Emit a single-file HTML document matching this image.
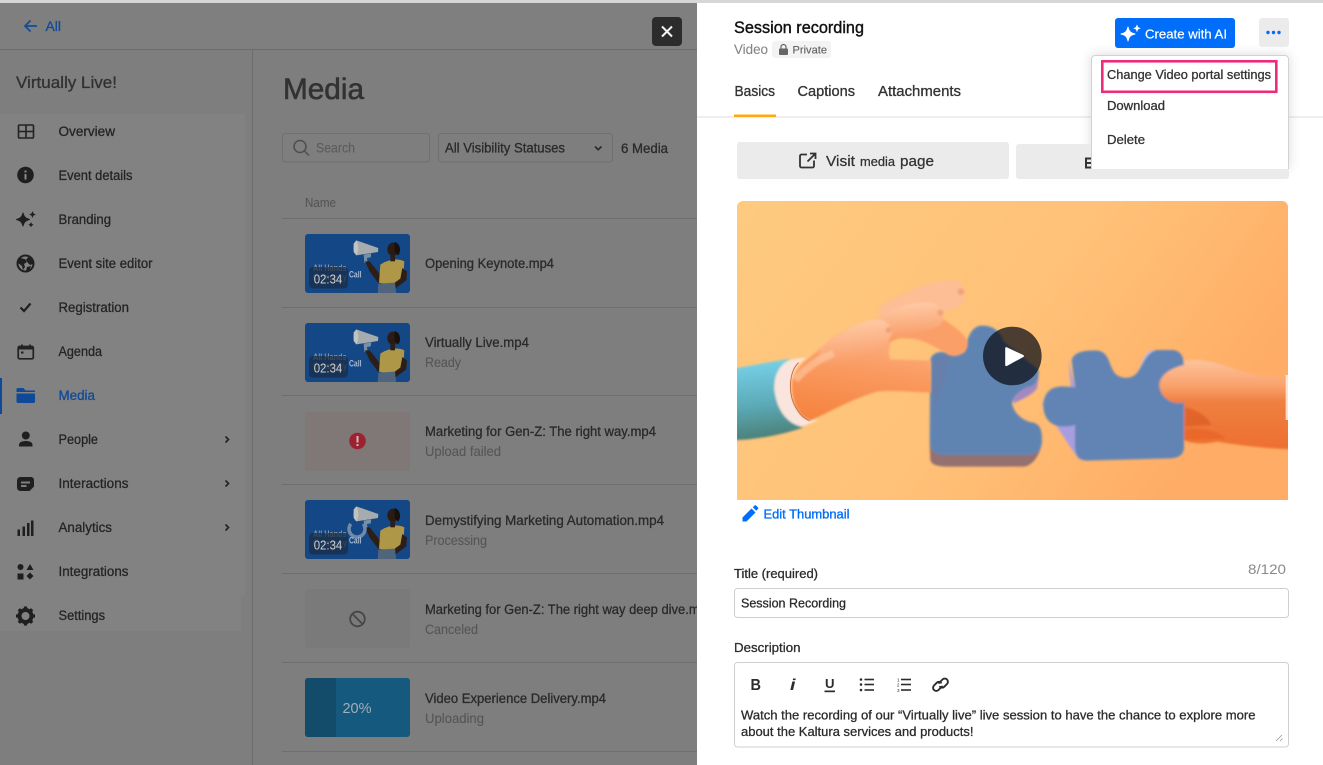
<!DOCTYPE html>
<html lang="en">
<head>
<meta charset="utf-8">
<title>Media - Session recording</title>
<style>
html,body{margin:0;padding:0;width:1323px;height:765px;overflow:hidden;background:#fff}
svg{display:block}
text{font-family:"Liberation Sans",Arial,sans-serif;white-space:pre}
.nav{font-size:13.5px;fill:#242424;stroke:#242424;stroke-width:.28}
.t{font-size:13.5px;fill:#2a2a2a;stroke:#2a2a2a;stroke-width:.3}
.s{font-size:13.5px;fill:#565656;stroke:#565656;stroke-width:.12}
.d{font-size:13px;fill:#2b2b2b;stroke:#2b2b2b;stroke-width:.28}
.tab{font-size:14.5px;fill:#333;stroke:#333;stroke-width:.32}
.dur{font-size:13px;fill:#cfcfcf}
.ah{font-size:9.5px;font-weight:700;fill:#8a95a2}
.co{font-size:9.5px;font-weight:700;fill:#6a7a90}
.call{font-size:9.5px;font-weight:700;fill:#a9bbcf}
</style>
</head>
<body>
<svg xmlns="http://www.w3.org/2000/svg" width="1323" height="765" viewBox="0 0 1323 765">
<defs>
  <linearGradient id="bg" x1="0" y1="0" x2="1" y2="0.4">
    <stop offset="0" stop-color="#fdca80"/><stop offset="0.6" stop-color="#ffc177"/><stop offset="1" stop-color="#ffad66"/>
  </linearGradient>
  <linearGradient id="sleeve" x1="0.4" y1="0" x2="0.5" y2="1">
    <stop offset="0" stop-color="#78d2ea"/><stop offset="0.55" stop-color="#5cabb8"/><stop offset="1" stop-color="#4a7d74"/>
  </linearGradient>
  <linearGradient id="handL" x1="0.6" y1="0" x2="0.4" y2="1">
    <stop offset="0" stop-color="#fdb88c"/><stop offset="0.5" stop-color="#fa9a60"/><stop offset="1" stop-color="#f58440"/>
  </linearGradient>
  <linearGradient id="fing" x1="0" y1="0" x2="0.15" y2="1">
    <stop offset="0" stop-color="#ffd0ae"/><stop offset="1" stop-color="#f99a63"/>
  </linearGradient>
  <linearGradient id="handR" gradientUnits="userSpaceOnUse" x1="0" y1="90" x2="0" y2="355">
    <stop offset="0" stop-color="#fdc49d"/><stop offset="0.3" stop-color="#f9a06a"/><stop offset="0.48" stop-color="#ef7f41"/><stop offset="1" stop-color="#ee7030"/>
  </linearGradient>
  <filter id="b1" x="-10%" y="-10%" width="120%" height="120%"><feGaussianBlur stdDeviation="3"/></filter>
  <filter id="sh" x="-20%" y="-20%" width="140%" height="140%"><feGaussianBlur stdDeviation="6"/></filter>
  <clipPath id="imgclip"><path d="M737 207a6 6 0 0 1 6-6h539a6 6 0 0 1 6 6v293H737z"/></clipPath>
  <clipPath id="thumbclip"><rect width="105" height="59" rx="3"/></clipPath>
  <g id="thumb">
    <g clip-path="url(#thumbclip)">
      <rect width="105" height="59" fill="#134785"/>
      <g transform="translate(-2 -2) scale(.3333)">
        <path d="M160 25C149 40 149 58 160 70L225 60L226 48Z" fill="#a6acae"/>
        <path d="M160 25C168 40 168 58 160 70L152 60L152 35Z" fill="#c0c3c2"/>
        <path d="M182 68L205 64L203 76L192 78L194 92L184 92Z" fill="#7690a8"/>
        <path d="M186 88L200 88L232 128L240 150L225 152L200 118Z" fill="#2d1f18"/>
        <path d="M232 98C255 82 285 78 304 88L300 150C280 158 250 158 228 152Z" fill="#ae9747"/>
        <path d="M298 108L312 118L310 145L268 176L256 166L292 140Z" fill="#2d1f18"/>
        <ellipse cx="270" cy="52" rx="17" ry="20" fill="#2a1b14"/>
        <path d="M275 30C292 34 296 60 285 70L275 60Z" fill="#17100c"/>
        <rect x="262" y="68" width="14" height="20" fill="#2d1f18"/>
        <path d="M226 155L276 152L280 186L224 186Z" fill="#50647c"/>
      </g>
    </g>
  </g>
</defs>

<!-- left dimmed app -->
<rect width="697" height="765" fill="#7e7e7e"/>
<rect x="0" y="0" width="1323" height="3" fill="#d6d6d6"/>
<rect x="0" y="3" width="697" height="46" fill="#7f7f7f"/>
<rect x="0" y="49" width="697" height="1" fill="#6c6c6c"/>
<rect x="252" y="50" width="1" height="715" fill="#6c6c6c"/>
<rect x="0" y="114" width="245" height="482" fill="#828282"/>
<rect x="0" y="596" width="241" height="35" fill="#828282"/>

<path d="M37 26H25M30.500 20.500L25 26l5.500 5.500" fill="none" stroke="#134b94" stroke-width="1.700"/>
<text x="45.500" y="31" font-size="13.500" fill="#134b94" stroke="#134b94" stroke-width=".3" textLength="15.500" lengthAdjust="spacingAndGlyphs">All</text>

<text x="16" y="88" font-size="16.500" fill="#313131" stroke="#313131" stroke-width=".3" textLength="101" lengthAdjust="spacingAndGlyphs">Virtually Live!</text>

<!-- nav icons -->
<g>
  <path d="M19.500 125h13a1 1 0 0 1 1 1v11a1 1 0 0 1-1 1h-13a1 1 0 0 1-1-1v-11a1 1 0 0 1 1-1zM26 125v13M18.500 131.500h15" fill="none" stroke="#222" stroke-width="1.600"/>
  <circle cx="25.500" cy="175" r="8.300" fill="#1f1f1f"/><rect x="24.500" y="174" width="2" height="5.500" fill="#8a8a8a"/><rect x="24.500" y="170.500" width="2" height="2" fill="#8a8a8a"/>
  <path d="M23 213C24 217 25.500 218.500 29.500 219.500C25.500 220.500 24 222 23 226C22 222 20.500 220.500 16.500 219.500C20.500 218.500 22 217 23 213Z" fill="#1f1f1f" stroke="#1f1f1f" stroke-width="1" stroke-linejoin="round"/>
  <path d="M32.500 211.500c.4 2 .9 2.500 3 3-2.100.5-2.600 1-3 3-.4-2-.9-2.500-3-3 2.100-.5 2.600-1 3-3zM31 222.500c.3 1.500.7 1.900 2.200 2.200-1.500.3-1.900.7-2.200 2.200-.3-1.500-.7-1.900-2.200-2.200 1.500-.3 1.900-.7 2.200-2.200z" fill="#1f1f1f" stroke="#1f1f1f" stroke-width=".6"/>
  <circle cx="25.500" cy="263.500" r="8" fill="none" stroke="#1f1f1f" stroke-width="2"/>
  <path d="M20 258l5 1 2 3-3 2 1 3-2 3-1-4-4-3zM28 257l4 2 1 5-3 1-2-2-2-3zM27 267l4-1-2 5-3 0z" fill="#1f1f1f"/>
  <path d="M20.500 307.500l3.500 3.500 6.500-7.500" fill="none" stroke="#1f1f1f" stroke-width="2.200"/>
  <path d="M19.500 346.500h12.500a1.300 1.300 0 0 1 1.300 1.300v9.700a1.300 1.300 0 0 1-1.300 1.300H19.500a1.300 1.300 0 0 1-1.300-1.300v-9.700a1.300 1.300 0 0 1 1.300-1.300z" fill="none" stroke="#222" stroke-width="1.700"/>
  <rect x="18.500" y="346" width="14.500" height="3.500" fill="#222"/><rect x="21" y="344.500" width="1.800" height="3" fill="#222"/><rect x="29" y="344.500" width="1.800" height="3" fill="#222"/><rect x="21" y="351.500" width="2.500" height="2" fill="#222"/>
  <path d="M16.500 389.500a1.500 1.500 0 0 1 1.500-1.500h5.500l2 2.500h9.500v1.500h-18.500z" fill="#0f4a98"/>
  <path d="M16.500 393.500h18.500v8a1.500 1.500 0 0 1-1.500 1.500h-15.500a1.500 1.500 0 0 1-1.500-1.500z" fill="#0f4a98"/>
  <circle cx="25.800" cy="435.500" r="4" fill="#1f1f1f"/><path d="M19 446.500v-1.500c0-3 3.500-4 6.800-4s6.700 1 6.700 4v1.500z" fill="#1f1f1f"/>
  <path d="M20.500 477h10.500a3 3 0 0 1 3 3v6.500l-4.500 4.500h-9a3.500 3.500 0 0 1-3.500-3.500v-7a3.500 3.500 0 0 1 3.500-3.500z" fill="#1f1f1f"/><rect x="21" y="481.500" width="9" height="2" fill="#7f7f7f"/><rect x="21" y="485" width="5.500" height="2" fill="#7f7f7f"/>
  <path d="M17.500 529.500h2.500v6.500h-2.500zM22.500 526.500h2.500v9.500h-2.500zM27 523h2.500v13h-2.500zM31 520.500h2.500v15.500h-2.500z" fill="#1f1f1f"/>
  <circle cx="20.500" cy="567" r="3" fill="#1f1f1f"/><path d="M30 564l3.500 6h-7z" fill="#1f1f1f"/><rect x="17.500" y="573.500" width="6" height="6" fill="#1f1f1f"/><path d="M30 572.500l3.500 3.500-3.500 3.500-3.500-3.500z" fill="#1f1f1f"/>
  <circle cx="25.500" cy="616" r="6" fill="none" stroke="#1f1f1f" stroke-width="4"/>
  <path d="M25.500 606.500v3M25.500 622.500v3M16 616h3M32 616h3M18.800 609.300l2 2M30.200 620.700l2 2M32.200 609.300l-2 2M20.800 620.700l-2 2" stroke="#1f1f1f" stroke-width="3.200" fill="none"/>
</g>
<rect x="0" y="378" width="2" height="36" fill="#0f4a98"/>

<g class="nav">
  <text x="58.500" y="136" textLength="56.500" lengthAdjust="spacingAndGlyphs">Overview</text>
  <text x="58.500" y="180" textLength="74" lengthAdjust="spacingAndGlyphs">Event details</text>
  <text x="58.500" y="224" textLength="52.500" lengthAdjust="spacingAndGlyphs">Branding</text>
  <text x="58.500" y="268" textLength="94" lengthAdjust="spacingAndGlyphs">Event site editor</text>
  <text x="58.500" y="312" textLength="70.500" lengthAdjust="spacingAndGlyphs">Registration</text>
  <text x="58.500" y="356" textLength="43.500" lengthAdjust="spacingAndGlyphs">Agenda</text>
  <text x="58.500" y="400" textLength="36.500" lengthAdjust="spacingAndGlyphs" style="fill:#0f4a98;stroke:#0f4a98">Media</text>
  <text x="58.500" y="444" textLength="39.500" lengthAdjust="spacingAndGlyphs">People</text>
  <text x="58.500" y="488" textLength="70" lengthAdjust="spacingAndGlyphs">Interactions</text>
  <text x="58.500" y="532" textLength="53.500" lengthAdjust="spacingAndGlyphs">Analytics</text>
  <text x="58.500" y="576" textLength="70" lengthAdjust="spacingAndGlyphs">Integrations</text>
  <text x="58.500" y="620" textLength="46.500" lengthAdjust="spacingAndGlyphs">Settings</text>
</g>
<path d="M225.500 436.500l3 3-3 3M225.500 480.500l3 3-3 3M225.500 524.500l3 3-3 3" fill="none" stroke="#222" stroke-width="1.600"/>

<!-- main content -->
<text x="283" y="99" font-size="30" fill="#323232" stroke="#323232" stroke-width=".6" textLength="81" lengthAdjust="spacingAndGlyphs">Media</text>

<rect x="282.500" y="133.500" width="147" height="28.500" rx="3" fill="none" stroke="#6f6f6f"/>
<circle cx="300" cy="146.500" r="6" fill="none" stroke="#4e4e4e" stroke-width="1.500"/>
<path d="M304.500 151l4.500 4.500" stroke="#4e4e4e" stroke-width="1.500"/>
<text x="316" y="152.500" class="s" style="fill:#5c5c5c;stroke:#5c5c5c" textLength="39" lengthAdjust="spacingAndGlyphs">Search</text>
<rect x="438.500" y="133.500" width="174" height="28.500" rx="3" fill="none" stroke="#6f6f6f"/>
<text x="445" y="152.500" class="t" textLength="120" lengthAdjust="spacingAndGlyphs">All Visibility Statuses</text>
<path d="M595 146.500l3.200 3.200 3.200-3.200" fill="none" stroke="#2a2a2a" stroke-width="1.600"/>
<text x="621" y="153" class="t" textLength="47" lengthAdjust="spacingAndGlyphs">6 Media</text>

<text x="305" y="207" font-size="12.500" fill="#555" stroke="#555" stroke-width=".1" textLength="31" lengthAdjust="spacingAndGlyphs">Name</text>

<g fill="#6e6e6e">
  <rect x="282" y="218" width="415" height="1"/>
  <rect x="282" y="307" width="415" height="1"/>
  <rect x="282" y="395" width="415" height="1"/>
  <rect x="282" y="484" width="415" height="1"/>
  <rect x="282" y="573" width="415" height="1"/>
  <rect x="282" y="662" width="415" height="1"/>
  <rect x="282" y="751" width="415" height="1"/>
</g>

<!-- row 1 -->
<use href="#thumb" x="305" y="234"/>
<text x="313" y="271" class="ah" textLength="33.500" lengthAdjust="spacingAndGlyphs">All Hands</text>
<text x="313" y="280" class="co" textLength="34" lengthAdjust="spacingAndGlyphs">Company</text>
<text x="349" y="277.500" class="call" textLength="12.500" lengthAdjust="spacingAndGlyphs">Call</text>
<rect x="309" y="267" width="39" height="21.500" rx="4" fill="#1a2c44" fill-opacity=".72"/>
<text x="313.700" y="283.500" class="dur" textLength="28.600" lengthAdjust="spacingAndGlyphs">02:34</text>
<text x="425" y="268" class="t" textLength="129" lengthAdjust="spacingAndGlyphs">Opening Keynote.mp4</text>

<!-- row 2 -->
<use href="#thumb" x="305" y="323"/>
<text x="313" y="360" class="ah" textLength="33.500" lengthAdjust="spacingAndGlyphs">All Hands</text>
<text x="313" y="369" class="co" textLength="34" lengthAdjust="spacingAndGlyphs">Company</text>
<text x="349" y="366.500" class="call" textLength="12.500" lengthAdjust="spacingAndGlyphs">Call</text>
<rect x="309" y="356" width="39" height="21.500" rx="4" fill="#1a2c44" fill-opacity=".72"/>
<text x="313.700" y="372.500" class="dur" textLength="28.600" lengthAdjust="spacingAndGlyphs">02:34</text>
<text x="425" y="347" class="t" textLength="104" lengthAdjust="spacingAndGlyphs">Virtually Live.mp4</text>
<text x="425" y="367" class="s" textLength="36" lengthAdjust="spacingAndGlyphs">Ready</text>

<!-- row 3 -->
<rect x="305" y="412" width="105" height="59" rx="3" fill="#807777"/>
<circle cx="357.500" cy="441" r="8.300" fill="#9b2230"/>
<rect x="356.500" y="436" width="2" height="6.500" fill="#d9b5b5"/><rect x="356.500" y="444" width="2" height="2" fill="#d9b5b5"/>
<text x="425" y="436" class="t" textLength="231" lengthAdjust="spacingAndGlyphs">Marketing for Gen-Z: The right way.mp4</text>
<text x="425" y="456" class="s" textLength="76" lengthAdjust="spacingAndGlyphs">Upload failed</text>

<!-- row 4 -->
<use href="#thumb" x="305" y="500"/>
<circle cx="357" cy="529" r="8" fill="none" stroke="#6f8aa8" stroke-width="3.500" stroke-dasharray="36 14" transform="rotate(-40 357 529)"/>
<text x="313" y="537" class="ah" textLength="33.500" lengthAdjust="spacingAndGlyphs">All Hands</text>
<text x="313" y="546" class="co" textLength="34" lengthAdjust="spacingAndGlyphs">Company</text>
<text x="349" y="543.500" class="call" textLength="12.500" lengthAdjust="spacingAndGlyphs">Call</text>
<rect x="309" y="533" width="39" height="21.500" rx="4" fill="#1a2c44" fill-opacity=".72"/>
<text x="313.700" y="549.500" class="dur" textLength="28.600" lengthAdjust="spacingAndGlyphs">02:34</text>
<text x="425" y="525" class="t" textLength="239" lengthAdjust="spacingAndGlyphs">Demystifying Marketing Automation.mp4</text>
<text x="425" y="545" class="s" textLength="62" lengthAdjust="spacingAndGlyphs">Processing</text>

<!-- row 5 -->
<rect x="305" y="589" width="105" height="59" rx="3" fill="#7a7a7a"/>
<circle cx="357.500" cy="619" r="7.300" fill="none" stroke="#464646" stroke-width="1.800"/>
<path d="M352.500 614l10 10" stroke="#464646" stroke-width="1.800"/>
<text x="425" y="614" class="t" textLength="289" lengthAdjust="spacingAndGlyphs">Marketing for Gen-Z: The right way deep dive.mp4</text>
<text x="425" y="634" class="s" textLength="53" lengthAdjust="spacingAndGlyphs">Canceled</text>

<!-- row 6 -->
<rect x="305" y="678" width="105" height="59" rx="3" fill="#15597f"/>
<path d="M308 678h28v59h-28a3 3 0 0 1-3-3v-53a3 3 0 0 1 3-3z" fill="#134b6b"/>
<text x="342.500" y="713" font-size="15" fill="#a3aeb6" textLength="29" lengthAdjust="spacingAndGlyphs">20%</text>
<text x="425" y="703" class="t" textLength="181" lengthAdjust="spacingAndGlyphs">Video Experience Delivery.mp4</text>
<text x="425" y="723" class="s" textLength="59" lengthAdjust="spacingAndGlyphs">Uploading</text>

<!-- close button -->
<rect x="652" y="17" width="30" height="29" rx="4" fill="#2c2c2c"/>
<path d="M662 26.500l10 10M672 26.500l-10 10" stroke="#f2f2f2" stroke-width="2"/>

<!-- right panel -->
<rect x="697" y="3" width="626" height="762" fill="#fff"/>

<text x="734" y="33" font-size="16.500" fill="#111" stroke="#111" stroke-width=".4" textLength="130" lengthAdjust="spacingAndGlyphs">Session recording</text>
<text x="734" y="54" font-size="13.500" fill="#858585" stroke="#858585" stroke-width=".1" textLength="34" lengthAdjust="spacingAndGlyphs">Video</text>
<rect x="772" y="41" width="59" height="17" rx="3" fill="#f3f3f3"/>
<rect x="779" y="48.500" width="9" height="6.500" rx="1" fill="#666"/>
<path d="M781 48.500v-1.500a2.500 2.500 0 0 1 5 0v1.500" fill="none" stroke="#666" stroke-width="1.200"/>
<text x="792.500" y="53.500" font-size="11" fill="#5e5e5e" stroke="#5e5e5e" stroke-width=".12" textLength="34.500" lengthAdjust="spacingAndGlyphs">Private</text>

<text x="734.500" y="96" class="tab" textLength="40.500" lengthAdjust="spacingAndGlyphs">Basics</text>
<text x="797.500" y="96" class="tab" textLength="57.500" lengthAdjust="spacingAndGlyphs">Captions</text>
<text x="878" y="96" class="tab" textLength="83" lengthAdjust="spacingAndGlyphs">Attachments</text>
<rect x="697" y="116.500" width="626" height="1" fill="#dedede"/>
<rect x="734" y="114.500" width="42" height="2.500" fill="#ffa90f"/>

<!-- action buttons -->
<rect x="737" y="142" width="272" height="37" rx="3" fill="#ebebeb"/>
<path d="M807 154.500h-5.500a1.500 1.500 0 0 0-1.500 1.500v10a1.500 1.500 0 0 0 1.500 1.500h11a1.500 1.500 0 0 0 1.500-1.500v-5.500" fill="none" stroke="#333" stroke-width="1.800"/>
<path d="M810 153.500h5.500v5.500M815 154l-7.500 7.500" fill="none" stroke="#333" stroke-width="1.800"/>
<text x="826" y="166" font-size="15" fill="#333" stroke="#333" stroke-width=".25" textLength="29" lengthAdjust="spacingAndGlyphs">Visit</text>
<text x="860" y="166" font-size="13" fill="#333" stroke="#333" stroke-width=".25" textLength="35" lengthAdjust="spacingAndGlyphs">media</text>
<text x="900" y="166" font-size="15" fill="#333" stroke="#333" stroke-width=".25" textLength="34" lengthAdjust="spacingAndGlyphs">page</text>

<!-- dropdown menu: shadow first, then second button peeking below it -->
<rect x="1091" y="55" width="198" height="114" fill="#000" opacity=".14" filter="url(#sh)"/>
<rect x="1016" y="144" width="273" height="35" rx="3" fill="#ebebeb"/>
<path d="M1085 157.500h7v2h-5v2.500h5v2h-5v2.500h5v2h-7z" fill="#333"/>
<path d="M1091 169V59a4 4 0 0 1 4-4h190a4 4 0 0 1 4 4v110z" fill="#fff"/>
<path d="M1091.500 169V59a3.500 3.500 0 0 1 3.500-3.500h190a3.500 3.500 0 0 1 3.500 3.500v110" fill="none" stroke="#d2d2d2"/>
<text x="1107" y="79" font-size="13" fill="#333" stroke="#333" stroke-width=".3" textLength="164" lengthAdjust="spacingAndGlyphs">Change Video portal settings</text>
<text x="1107" y="110" font-size="13" fill="#333" stroke="#333" stroke-width=".3" textLength="58" lengthAdjust="spacingAndGlyphs">Download</text>
<text x="1107" y="144" font-size="13" fill="#333" stroke="#333" stroke-width=".3" textLength="38" lengthAdjust="spacingAndGlyphs">Delete</text>
<rect x="1102.300" y="61.300" width="174" height="30.500" fill="none" stroke="#ee2a7b" stroke-width="2.600"/>

<!-- create with AI + dots -->
<rect x="1115" y="18" width="120" height="30" rx="3" fill="#006efa"/>
<path d="M1128 27C1129 31.500 1130.500 33 1135 34C1130.500 35 1129 36.500 1128 41C1127 36.500 1125.500 35 1121 34C1125.500 33 1127 31.500 1128 27Z" fill="#fff" stroke="#fff" stroke-width="1" stroke-linejoin="round"/>
<path d="M1137 25c.5 2.200 1 2.800 3.200 3.300-2.200.5-2.700 1.100-3.200 3.300-.5-2.200-1-2.800-3.200-3.300 2.200-.5 2.700-1.100 3.200-3.300z" fill="#fff" stroke="#fff" stroke-width=".6" stroke-linejoin="round"/>
<text x="1145" y="38.500" font-size="13" fill="#fff" stroke="#fff" stroke-width=".2" textLength="82" lengthAdjust="spacingAndGlyphs">Create with AI</text>
<rect x="1259" y="18" width="30" height="29" rx="3" fill="#ebebeb"/>
<circle cx="1268" cy="32.500" r="1.700" fill="#006efa"/><circle cx="1273.500" cy="32.500" r="1.700" fill="#006efa"/><circle cx="1279" cy="32.500" r="1.700" fill="#006efa"/>

<!-- thumbnail illustration -->
<g clip-path="url(#imgclip)">
  <rect x="737" y="201" width="551" height="299" fill="url(#bg)"/>

  <!-- left hand & piece : coords at 3x from (737,270) -->
  <g transform="translate(737 270) scale(.33333)">
    <g filter="url(#b1)">
      <path d="M-5 295L165 265C130 280 110 320 115 370C120 420 150 460 200 472C150 490 60 510 -5 510Z" fill="url(#sleeve)"/>
      <path d="M165 268L210 263C170 285 155 330 165 380C175 420 195 445 245 450L195 470C150 462 120 420 112 360C110 320 125 280 165 268Z" fill="#f9e5dd"/>
      <path d="M578 520L580 570C585 588 610 590 640 590L860 590C885 588 905 560 912 530L880 545L610 550Z" fill="#94706f"/>
      <path d="M830 390C840 365 870 345 905 320L900 355C885 375 860 385 830 400Z" fill="#a388c2"/>
      <path d="M580 270C585 250 600 245 630 245L680 245C690 230 690 175 730 167C770 165 790 185 800 215L905 300C905 330 900 340 880 350C850 355 830 380 825 400C830 430 860 455 890 458C910 465 915 480 915 510C915 540 900 555 870 555L620 555C590 555 578 540 578 510Z" fill="#6084b2"/>
      <path d="M590 265L640 255L620 340L590 420Z" fill="#6b7ca6" opacity=".6"/>
    </g>
    <g filter="url(#b1)">
      <!-- palm + thumb -->
      <path d="M165 345C165 300 210 270 250 235C310 180 370 150 440 150L470 200C460 225 450 245 460 268L582 272L582 368C520 365 460 360 420 365C350 385 290 420 220 452C185 440 165 400 165 345Z" fill="url(#handL)"/>
      <!-- top finger -->
      <path d="M420 115C520 55 590 30 650 30C690 40 695 95 660 112C620 125 560 130 470 170Z" fill="#fdbd95"/>
      <!-- index finger -->
      <path d="M480 205C530 195 570 150 615 145C660 175 695 200 692 225C690 250 660 265 635 255C600 235 560 205 510 205Z" fill="#fa9f68"/>
      <!-- middle finger -->
      <path d="M380 170C460 110 540 90 590 100C625 115 630 155 600 172C560 185 520 190 460 215Z" fill="url(#fing)"/>
      <!-- near finger -->
      <path d="M250 235C310 185 370 150 430 148C465 160 475 190 455 208C420 240 390 260 350 285C310 300 270 290 240 270Z" fill="url(#fing)"/>
      <circle cx="672" cy="65" r="10" fill="#ee9b70" opacity=".8"/>
      <circle cx="610" cy="128" r="9" fill="#ee9b70" opacity=".8"/>
      <circle cx="455" cy="180" r="9" fill="#ea9a70" opacity=".8"/>
      <path d="M175 330C210 290 250 265 290 250" fill="none" stroke="#ffc9a4" stroke-width="22" opacity=".6"/>
    </g>
    <path d="M185 278C155 305 152 375 178 415C190 435 200 445 218 452" fill="none" stroke="#c9704d" stroke-width="3"/>
  </g>

  <!-- right piece & hand : coords at 3x from (1030,330) -->
  <g transform="translate(1030 330) scale(.33333)">
    <g filter="url(#b1)">
      <path d="M115 90L135 175L35 220L120 350L150 392L135 300Z" fill="#a79ee0"/>
      <path d="M320 130C340 105 335 70 370 60L380 90L340 145Z" fill="#b8bdf0"/>
      <path d="M125 92C130 65 165 60 205 62C240 70 235 105 255 130C270 145 300 150 320 130C340 105 345 70 380 60L430 60C460 65 462 90 462 120L462 350C462 375 445 385 420 385L170 392C140 390 135 370 135 340L135 285C110 292 70 295 50 265C35 240 35 200 60 180C80 165 110 170 135 172Z" fill="#6284b4"/>
      <path d="M462 92C510 85 560 95 620 120C670 135 720 140 775 145L780 358C700 355 620 345 560 335C520 345 480 340 462 330L462 218C420 225 390 200 388 165C390 135 420 115 462 105Z" fill="url(#handR)"/>
      <path d="M465 232C500 240 530 255 545 285L465 290Z" fill="#dc5d25" opacity=".75"/>
      <path d="M465 298C510 292 560 300 590 325L465 330Z" fill="#e8642a" opacity=".75"/>
    </g>
    <rect x="767" y="135" width="10" height="135" fill="#fdf0e6" opacity=".85"/>
  </g>

  <circle cx="1012.300" cy="356" r="29.300" fill="#0c0f18" fill-opacity=".74"/>
  <path d="M1006.300 348.300v16.700l16.500-9z" fill="#fff" stroke="#fff" stroke-width="2.200" stroke-linejoin="round"/>
</g>

<!-- edit thumbnail -->
<path d="M742.500 517.500l9-9 4 4-9 9h-4zM752.800 507.200l1.800-1.700a1 1 0 0 1 1.400 0l2 2a1 1 0 0 1 0 1.400l-1.800 1.800z" fill="#006efa"/>
<text x="763.500" y="518.500" font-size="13" fill="#006efa" stroke="#006efa" stroke-width=".35" textLength="86" lengthAdjust="spacingAndGlyphs">Edit Thumbnail</text>

<!-- form -->
<text x="734" y="578" class="d" textLength="84" lengthAdjust="spacingAndGlyphs">Title (required)</text>
<text x="1248" y="574" font-size="14" fill="#8a8a8a" textLength="38" lengthAdjust="spacingAndGlyphs">8/120</text>
<rect x="734.500" y="588.500" width="554" height="29" rx="3" fill="#fff" stroke="#cfcfcf"/>
<text x="741" y="607.500" class="d" textLength="105" lengthAdjust="spacingAndGlyphs">Session Recording</text>
<text x="734" y="652" class="d" textLength="66.500" lengthAdjust="spacingAndGlyphs">Description</text>
<rect x="734.500" y="662.500" width="554" height="84.500" rx="3" fill="#fff" stroke="#cfcfcf"/>

<text x="750.500" y="690" font-size="15.500" font-weight="700" fill="#2c2c2c" textLength="10.500" lengthAdjust="spacingAndGlyphs">B</text>
<text x="790" y="690" font-size="15.500" font-weight="700" font-style="italic" fill="#2c2c2c" textLength="5.500" lengthAdjust="spacingAndGlyphs">i</text>
<text x="825" y="688" font-size="13" font-weight="700" fill="#2c2c2c" textLength="9.500" lengthAdjust="spacingAndGlyphs">U</text>
<rect x="824.500" y="690.500" width="10.500" height="1.700" fill="#2c2c2c"/>
<g fill="#2c2c2c">
  <circle cx="861" cy="679.500" r="1.300"/><circle cx="861" cy="684.500" r="1.300"/><circle cx="861" cy="690" r="1.300"/>
  <rect x="864.500" y="678.700" width="9.500" height="1.600"/><rect x="864.500" y="683.700" width="9.500" height="1.600"/><rect x="864.500" y="689.200" width="9.500" height="1.600"/>
  <rect x="901" y="678.700" width="10" height="1.600"/><rect x="901" y="683.700" width="10" height="1.600"/><rect x="901" y="689.200" width="10" height="1.600"/>
</g>
<text x="897" y="681.500" font-size="4.500" fill="#2c2c2c">1</text>
<text x="897" y="686.500" font-size="4.500" fill="#2c2c2c">2</text>
<text x="897" y="692" font-size="4.500" fill="#2c2c2c">3</text>
<g fill="none" stroke="#2c2c2c" stroke-width="1.900" stroke-linecap="round">
  <path d="M939 683l3.500-3.500a3 3 0 0 1 4.500 4.500l-2.800 2.800a3 3 0 0 1-4.200 0"/>
  <path d="M942 686.500l-3.500 3.500a3 3 0 0 1-4.500-4.500l2.800-2.800a3 3 0 0 1 4.200 0"/>
</g>

<text x="741" y="719.500" class="d" textLength="514.500" lengthAdjust="spacingAndGlyphs">Watch the recording of our “Virtually live” live session to have the chance to explore more</text>
<text x="741" y="736" class="d" textLength="232.500" lengthAdjust="spacingAndGlyphs">about the Kaltura services and products!</text>
<path d="M1276 741l6-6M1280 741l2.500-2.500" stroke="#9a9a9a" stroke-width=".8"/>
</svg>
</body>
</html>
